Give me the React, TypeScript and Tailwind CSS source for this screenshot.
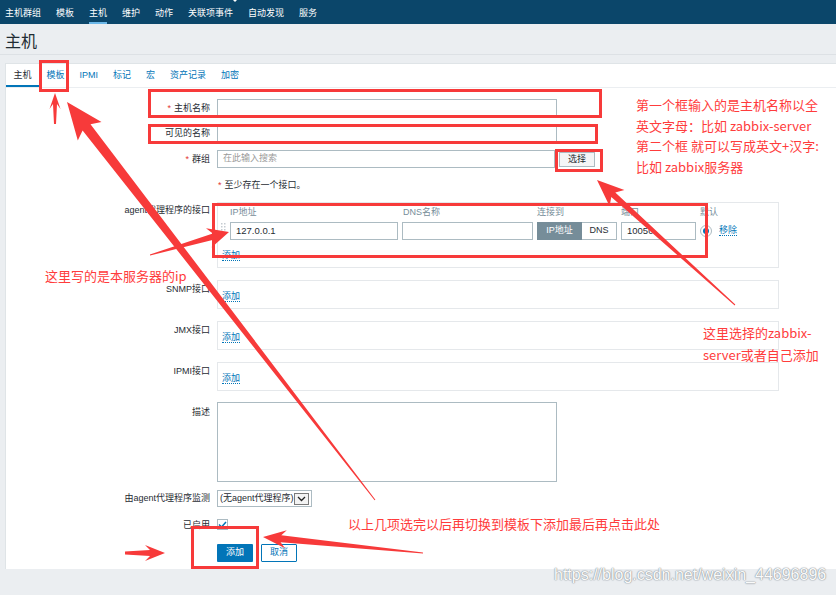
import React from "react";

type P = [number, number];

function arrowPoints(x1: number, y1: number, x2: number, y2: number, w0: number, w1: number, hl: number, hw: number) {
  const dx = x2 - x1, dy = y2 - y1;
  const L = Math.hypot(dx, dy);
  const ux = dx / L, uy = dy / L;
  const nx = -uy, ny = ux;
  const bx = x2 - ux * hl, by = y2 - uy * hl;
  const jx = bx + ux * 2, jy = by + uy * 2;
  const sx = bx - ux * 3, sy = by - uy * 3;
  const pts: P[] = [
    [x1 + (nx * w0) / 2, y1 + (ny * w0) / 2],
    [jx + (nx * w1) / 2, jy + (ny * w1) / 2],
    [sx + (nx * hw) / 2, sy + (ny * hw) / 2],
    [x2, y2],
    [sx - (nx * hw) / 2, sy - (ny * hw) / 2],
    [jx - (nx * w1) / 2, jy - (ny * w1) / 2],
    [x1 - (nx * w0) / 2, y1 - (ny * w0) / 2],
  ];
  return pts.map((p) => p.map((v) => v.toFixed(1)).join(",")).join(" ");
}

const RED = "#f73a3a";

function Label({ children, req, className = "" }: { children: React.ReactNode; req?: boolean; className?: string }) {
  return (
    <div className={`w-[204px] shrink-0 text-right leading-[11px] ${className}`}>
      {req && <span className="text-[#e33734] mr-[3px]">*</span>}
      {children}
    </div>
  );
}

function AddLink() {
  return <span className="text-[#0275b8] border-b border-dotted border-[#0275b8] leading-[10px]">添加</span>;
}

export default function App() {
  const nav = ["主机群组", "模板", "主机", "维护", "动作", "关联项事件", "自动发现", "服务"];
  const tabs = ["主机", "模板", "IPMI", "标记", "宏", "资产记录", "加密"];
  return (
    <div className="relative w-[836px] h-[595px] overflow-hidden bg-[#ebeef1] font-['Liberation_Sans','Noto_Sans_CJK_SC',sans-serif] text-[9px] text-[#1f2c33]">
      {/* top nav */}
      <nav className="h-6 bg-[#0b466a] flex gap-[15px] pl-[5px] text-white">
        {nav.map((n, i) => (
          <div key={n} className={`h-full flex items-center pt-[4px] ${i === 2 ? "shadow-[inset_0_-2px_0_#6bb7e8]" : ""}`}>
            {n}
          </div>
        ))}
      </nav>
      {/* header */}
      <header className="h-[31px] border-b border-[#dde1e5] pl-[5px] pt-[8px]">
        <h1 className="text-[16px] leading-[20px]">主机</h1>
      </header>
      {/* card */}
      <div className="mt-[8px] ml-[5px] h-[506px] bg-white border-t border-l border-[#dfe4e7]">
        <div className="h-[24px] flex border-b border-[#ebeef1]">
          {tabs.map((t, i) => (
            <div
              key={t}
              className={`h-full flex items-center px-[7.5px] ${i === 0 ? "text-[#1f2c33] shadow-[inset_0_-2px_0_#0275b8]" : "text-[#0275b8]"}`}
            >
              {t}
            </div>
          ))}
        </div>
        <div className="flex flex-col">
          {/* host name */}
          <div className="flex items-center mt-[11px]">
            <Label req>主机名称</Label>
            <div className="ml-[7px] w-[340px] h-[18px] border border-[#acbbc2] bg-white" />
          </div>
          <div className="flex items-center mt-[7px]">
            <Label>可见的名称</Label>
            <div className="ml-[7px] w-[340px] h-[18px] border border-[#acbbc2] bg-white" />
          </div>
          <div className="flex items-end mt-[8px]">
            <Label req className="self-center">群组</Label>
            <div className="ml-[7px] w-[338px] h-[18px] border border-[#acbbc2] bg-white flex items-center pl-[5px] text-[#9a9a9a]">
              在此输入搜索
            </div>
            <div className="ml-[4px] mb-[1px] w-[36px] h-[15px] border border-[#acbbc2] bg-[#f4f5f6] flex items-center justify-center">
              选择
            </div>
          </div>
          <div className="mt-[12px] pl-[212px] h-[11px] leading-[11px]">
            <span className="text-[#e33734] mr-[3px]">*</span>至少存在一个接口。
          </div>
          {/* agent interface */}
          <div className="flex mt-[11px]">
            <Label className="pt-[3px]">agent代理程序的接口</Label>
            <div className="ml-[7px] w-[562px] h-[66px] border border-[#e5e8eb] pl-[3px] pt-[4px]">
              <div className="grid grid-cols-[5px_168px_131px_80px_75px_12px_auto] gap-x-[4px] items-center">
                <div />
                <div className="leading-[11px] text-[#768d99]">IP地址</div>
                <div className="leading-[11px] text-[#768d99] pl-[1px]">DNS名称</div>
                <div className="leading-[11px] text-[#768d99]">连接到</div>
                <div className="leading-[11px] text-[#768d99]">端口</div>
                <div className="leading-[11px] text-[#768d99] whitespace-nowrap">默认</div>
                <div />
                <div className="h-[4px] col-span-7" />
                <svg width="5" height="10" viewBox="0 0 5 10" className="self-start mt-[1px]">
                  {[0, 3, 6, 9].map((y) => (
                    <g key={y}>
                      <rect x="0" y={y} width="1.5" height="1.5" fill="#c5ccd1" />
                      <rect x="3" y={y} width="1.5" height="1.5" fill="#c5ccd1" />
                    </g>
                  ))}
                </svg>
                <div className="h-[18px] border border-[#acbbc2] flex items-center pl-[5px] text-[9.5px]">127.0.0.1</div>
                <div className="h-[18px] border border-[#acbbc2]" />
                <div className="h-[18px] flex">
                  <div className="w-[45px] bg-[#768d99] text-white flex items-center justify-center">IP地址</div>
                  <div className="flex-1 border border-l-0 border-[#acbbc2] flex items-center justify-center">DNS</div>
                </div>
                <div className="h-[18px] border border-[#acbbc2] flex items-center pl-[5px] text-[9.5px]">10050</div>
                <div className="w-[12px] h-[12px] rounded-full border border-[#acbbc2] flex items-center justify-center">
                  <div className="w-[6px] h-[6px] rounded-full bg-[#0275b8]" />
                </div>
                <div className="pl-[3px]">
                  <span className="text-[#0275b8] border-b border-dotted border-[#0275b8] leading-[10px]">移除</span>
                </div>
              </div>
              <div className="mt-[10px] pl-[1px] h-[11px] leading-[11px]">
                <AddLink />
              </div>
            </div>
          </div>
          {/* other interfaces */}
          {["SNMP接口", "JMX接口", "IPMI接口"].map((l) => (
            <div key={l} className="flex mt-[12px]">
              <Label className="pt-[4px]">{l}</Label>
              <div className="ml-[7px] w-[562px] h-[29px] border border-[#e5e8eb] pl-[4px] pt-[10px] leading-[11px]">
                <AddLink />
              </div>
            </div>
          ))}
          {/* description */}
          <div className="flex mt-[11px]">
            <Label className="pt-[5px]">描述</Label>
            <div className="ml-[7px] w-[340px] h-[80px] border border-[#acbbc2] bg-white" />
          </div>
          {/* proxy */}
          <div className="flex items-center mt-[8px]">
            <Label>由agent代理程序监测</Label>
            <div className="ml-[7px] w-[95px] h-[17px] border border-[#acbbc2] flex items-center pl-[2px]">
              <span className="whitespace-nowrap">(无agent代理程序)</span>
              <div className="ml-auto mr-[2px] w-[15px] h-[12px] border border-[#7a7a7a] bg-[#f3f3f3] flex items-center justify-center">
                <svg width="9" height="6" viewBox="0 0 9 6">
                  <path d="M1 1 L4.5 4.5 L8 1" fill="none" stroke="#222" strokeWidth="1.3" />
                </svg>
              </div>
            </div>
          </div>
          {/* enabled */}
          <div className="flex items-center mt-[10px]">
            <Label className="pt-[3px]">已启用</Label>
            <div className="ml-[7px] w-[11px] h-[11px] border border-[#acbbc2] flex items-center justify-center">
              <svg width="9" height="7" viewBox="0 0 9 7">
                <path d="M1 3.5 L3.5 6 L8 1" fill="none" stroke="#0275b8" strokeWidth="1.5" />
              </svg>
            </div>
          </div>
          {/* buttons */}
          <div className="flex mt-[13px] pl-[211px] gap-[8px]">
            <div className="w-[36px] h-[18px] bg-[#0275b8] text-white flex items-center justify-center rounded-[1px]">添加</div>
            <div className="w-[36px] h-[18px] border border-[#0275b8] text-[#0275b8] bg-white flex items-center justify-center rounded-[1px]">
              取消
            </div>
          </div>
        </div>
      </div>

      {/* watermark */}
      <div className="absolute left-[554px] top-[565px] text-[16px] leading-[20px] text-[#fafafa] font-['Liberation_Sans',sans-serif] [text-shadow:0_0_1px_#8e969c,0_0_1px_#8e969c,0_0_2px_#b4bac0] whitespace-nowrap">
        https://blog.csdn.net/weixin_44696896
      </div>

      {/* annotation overlay */}
      <svg className="absolute inset-0 pointer-events-none" width="836" height="595" viewBox="0 0 836 595">
        <polygon points="233,0 237,0 235,2" fill="#ffffff" />
        <g fill="none" stroke={RED} strokeWidth="3">
          <rect x="40.5" y="61.5" width="27" height="29" />
          <rect x="149.5" y="90.5" width="451" height="26" />
          <rect x="149.5" y="125.5" width="447" height="17" />
          <rect x="556.5" y="150.5" width="45" height="20" />
          <rect x="213.5" y="204.5" width="493" height="52" />
          <rect x="192.5" y="527.5" width="65" height="40" />
        </g>
        <g fill={RED}>
          <polygon points={arrowPoints(55, 124, 55, 93, 2, 4, 13, 11)} />
          <polygon points={arrowPoints(375, 500, 67, 102, 1, 10, 34, 30)} />
          <polygon points={arrowPoints(150, 255, 229, 232, 1, 6, 18, 20)} />
          <polygon points={arrowPoints(735, 305, 597, 180, 1, 6, 24, 22)} />
          <polygon points={arrowPoints(423, 553, 263, 537, 1, 7, 20, 18)} />
          <polygon points={arrowPoints(125, 553, 165, 553, 3, 6, 17, 16)} />
        </g>
      </svg>

      {/* annotation texts */}
      <div className="absolute left-[636px] top-[95px] text-[13px] leading-[20.5px] text-[#ff3c3c] font-['Noto_Sans_CJK_SC',sans-serif] whitespace-nowrap">
        <div>第一个框输入的是主机名称以全</div>
        <div>英文字母：比如 zabbix-server</div>
        <div>第二个框 就可以写成英文+汉字:</div>
        <div>比如 zabbix服务器</div>
      </div>
      <div className="absolute left-[45px] top-[266px] text-[13px] leading-[20px] text-[#ff3c3c] font-['Noto_Sans_CJK_SC',sans-serif] whitespace-nowrap">
        这里写的是本服务器的ip
      </div>
      <div className="absolute left-[703px] top-[322px] text-[13px] leading-[21.5px] text-[#ff3c3c] font-['Noto_Sans_CJK_SC',sans-serif] whitespace-nowrap">
        <div>这里选择的zabbix-</div>
        <div>server或者自己添加</div>
      </div>
      <div className="absolute left-[348px] top-[514px] text-[13px] leading-[20px] text-[#ff3c3c] font-['Noto_Sans_CJK_SC',sans-serif] whitespace-nowrap">
        以上几项选完以后再切换到模板下添加最后再点击此处
      </div>
    </div>
  );
}
